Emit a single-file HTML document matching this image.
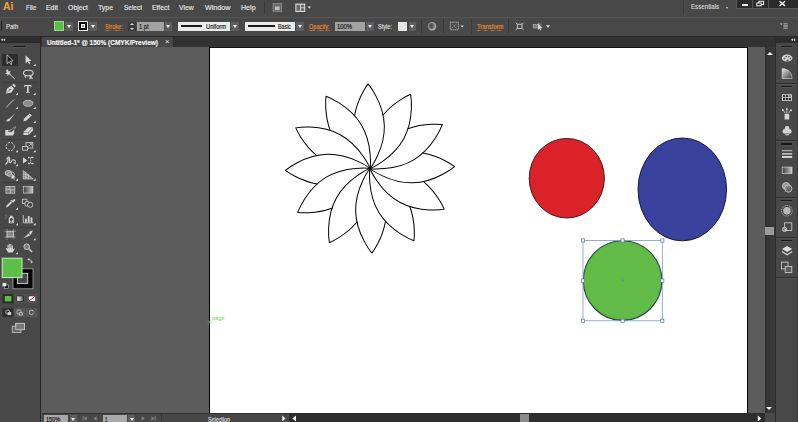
<!DOCTYPE html>
<html>
<head>
<meta charset="utf-8">
<title>Illustrator</title>
<style>
html,body{margin:0;padding:0;}
body{width:798px;height:422px;overflow:hidden;background:#5c5c5c;font-family:"Liberation Sans",sans-serif;position:relative;}
.abs{position:absolute;}
#menubar{left:0;top:0;width:798px;height:16px;background:#484848;}
#menusep{left:0;top:15.9px;width:798px;height:0.9px;background:#2c2c2c;}
#menuhl{left:0;top:17.4px;width:798px;height:0.8px;background:#545454;}
#ctrl{left:0;top:16px;width:798px;height:20px;background:#484848;}
#tabbar{left:0;top:35.8px;width:798px;height:11.1px;background:#323232;border-top:0.7px solid #292929;box-sizing:border-box;}
.mi{position:absolute;top:2.5px;font-size:8.3px;line-height:10px;color:#dcdcdc;white-space:nowrap;}
.ct{position:absolute;top:21.7px;font-size:7.2px;line-height:10px;color:#d8d8d8;white-space:nowrap;}
.t{position:absolute;white-space:nowrap;line-height:10px;transform-origin:0 50%;-webkit-text-stroke:0.18px currentColor;}
.or{background:linear-gradient(90deg,#c87a2c 55%,transparent 55%) 0 8.3px/1.3px 0.8px repeat-x;}
.dd{position:absolute;top:21.5px;height:9.5px;background:#5e5e5e;}
.dd:after{content:"";position:absolute;left:50%;top:3.5px;margin-left:-2px;width:0;height:0;border-left:2px solid transparent;border-right:2px solid transparent;border-top:3px solid #f0f0f0;}
.fld{position:absolute;top:21.5px;height:9.5px;background:#a2a2a2;font-size:7px;line-height:9.5px;color:#1a1a1a;white-space:nowrap;}
.wf{background:#ececec;}
.vs{position:absolute;top:19px;width:1px;height:15px;background:#3a3a3a;}
#tools{left:0;top:36px;width:40px;height:386px;background:#484848;}
#toolhdr{left:0;top:36px;width:40px;height:7.1px;background:linear-gradient(#272727,#303030 1px,#2b2b2b);}
#tooledge{left:39.8px;top:36px;width:1.5px;height:386px;background:#262626;}
#tab{left:41.5px;top:36.5px;width:131.5px;height:10.4px;background:#474747;}
#tabtxt{left:47px;top:38px;font-size:7.6px;line-height:10px;font-weight:bold;color:#e0e0e0;white-space:nowrap;transform:scaleX(0.86);transform-origin:0 0;}
#canvas{left:41.3px;top:46.9px;width:724px;height:366.3px;background:#5c5c5c;}
#art{left:209px;top:46.7px;width:538.9px;height:366.3px;background:#fff;border-left:1px solid #000;border-right:0.9px solid #000;border-top:1.1px solid #111;box-sizing:border-box;}
#vscroll{left:764.7px;top:46.7px;width:11.1px;height:366.3px;background:linear-gradient(90deg,#2a2a2a 0,#343434 1px,#353535 5px,#3a3a3a 7px,#383838 9.5px,#2c2c2c 10.4px);}
#dockedge{left:775px;top:36px;width:0.9px;height:386px;background:#2c2c2c;}
#dock{left:776px;top:36px;width:22px;height:386px;background:#484848;}
#dockhdr{left:776px;top:36px;width:22px;height:7.1px;background:linear-gradient(#272727,#303030 1px,#2b2b2b);}
#status{left:42px;top:412.6px;width:733px;height:9.4px;background:#474747;border-top:0.9px solid #303030;box-sizing:border-box;}
#hscroll{left:289px;top:413px;width:476px;height:9px;background:#2d2d2d;}
.sfld{position:absolute;top:415px;height:7px;background:#a8a8a8;font-size:6.5px;line-height:8px;color:#111;}
.tsep{position:absolute;left:2px;width:36px;height:1px;background:#3f3f3f;}
.grip{position:absolute;height:1.4px;background:#181818;box-shadow:0 0.7px 0 #5a5a5a;}
svg{position:absolute;left:0;top:0;overflow:visible;}
</style>
</head>
<body>
<div id="menubar" class="abs"></div>
<div id="menusep" class="abs"></div>
<div id="ctrl" class="abs"></div>
<div id="menuhl" class="abs"></div>
<div id="tabbar" class="abs"></div>

<!-- menu -->
<div class="abs" style="left:3.2px;top:0.2px;font-size:11.7px;line-height:12px;font-weight:bold;color:#f2a33a;transform:scaleX(0.88);transform-origin:0 0;">Ai</div>
<div class="abs" style="left:263.5px;top:1px;width:1px;height:13px;background:#3a3a3a;"></div>
<div class="abs" style="left:683px;top:1px;width:1px;height:13px;background:#3c3c3c;"></div>
<div class="abs" style="left:725.5px;top:7px;border-left:1.5px solid transparent;border-right:1.5px solid transparent;border-top:2px solid #ddd;"></div>
<!-- window buttons -->
<div class="abs" style="left:736px;top:0;width:62px;height:8.5px;background:#2b2b2b;border-bottom:1px solid #5a5a5a;border-left:1px solid #5a5a5a;box-sizing:border-box;"></div>
<div class="abs" style="left:752px;top:0;width:1px;height:8px;background:#555;"></div>
<div class="abs" style="left:768px;top:0;width:1px;height:8px;background:#555;"></div>
<div class="abs" style="left:741.8px;top:4.1px;width:6.2px;height:1.7px;background:#f2f2f2;"></div>

<!-- control bar -->
<div class="abs" style="left:1.3px;top:21px;width:1.2px;height:10px;background:#222;"></div>
<div class="abs" style="left:54px;top:21px;width:10px;height:10px;background:#5cbd46;border:1px solid #9bd68c;box-sizing:border-box;"></div>
<div class="dd" style="left:65px;width:8px;"></div>
<div class="abs" style="left:78px;top:21px;width:9.5px;height:10px;background:#000;border:1px solid #e6e6e6;box-sizing:border-box;"></div>
<div class="abs" style="left:80.7px;top:23.7px;width:4.2px;height:4.6px;background:#8e8e8e;border:1px solid #fff;box-sizing:border-box;"></div>
<div class="dd" style="left:89px;width:8px;"></div>
<div class="abs" style="left:127.8px;top:21.5px;width:7.8px;height:9.5px;background:#3a3a3a;"></div>
<div class="abs" style="left:130px;top:23px;border-left:2px solid transparent;border-right:2px solid transparent;border-bottom:2.5px solid #ddd;"></div>
<div class="abs" style="left:130px;top:27.5px;border-left:2px solid transparent;border-right:2px solid transparent;border-top:2.5px solid #ddd;"></div>
<div class="fld" style="left:137px;width:26.5px;">  </div>
<div class="dd" style="left:164.8px;width:7px;"></div>
<div class="fld wf" style="left:177.8px;width:52px;"></div>
<div class="abs" style="left:181px;top:25.1px;width:21px;height:1.8px;background:#1c1c1c;"></div>
<div class="dd" style="left:230.6px;width:8px;"></div>
<div class="fld wf" style="left:244.8px;width:50.2px;"></div>
<div class="abs" style="left:248px;top:25.1px;width:27px;height:1.8px;background:#1c1c1c;"></div>
<div class="dd" style="left:296px;width:8px;"></div>
<div class="fld" style="left:335.3px;width:29.7px;"></div>
<div class="dd" style="left:366px;width:7.8px;"></div>
<div class="abs" style="left:397.5px;top:21.5px;width:9.8px;height:9.5px;background:#e6e6e6;"></div>
<div class="dd" style="left:408.5px;width:7px;"></div>
<div class="vs" style="left:421px;"></div>
<div class="vs" style="left:443px;"></div>
<div class="vs" style="left:471px;"></div>
<div class="vs" style="left:507.5px;"></div>

<!-- tabs -->
<div id="tab" class="abs"></div>
<div class="abs" style="left:164.9px;top:38.4px;font-size:7.6px;line-height:8px;color:#f0f0f0;">×</div>

<!-- canvas -->
<div id="canvas" class="abs"></div>
<div id="art" class="abs"></div>
<div id="vscroll" class="abs"></div>
<div class="abs" style="left:765.3px;top:226.7px;width:8.8px;height:8.8px;background:#9a9a9a;"></div>
<div class="abs" style="left:766.7px;top:51.9px;width:0;height:0;border-left:3.1px solid transparent;border-right:3.1px solid transparent;border-bottom:3.8px solid #f8f8f8;"></div>
<div class="abs" style="left:766.4px;top:406.6px;width:0;height:0;border-left:3.1px solid transparent;border-right:3.1px solid transparent;border-top:3.8px solid #f8f8f8;"></div>

<!-- status -->
<div id="status" class="abs"></div>
<div id="hscroll" class="abs"></div>
<div class="abs" style="left:765px;top:413px;width:9.5px;height:9px;background:#4a4a4a;"></div>
<div class="abs" style="left:520px;top:413.7px;width:8.7px;height:9px;background:#8a8a8a;"></div>
<div class="sfld" style="left:44px;width:23.7px;"></div>
<div class="abs" style="left:69.5px;top:415px;width:7px;height:7px;background:#5e5e5e;"></div>
<div class="abs" style="left:71px;top:418px;border-left:2px solid transparent;border-right:2px solid transparent;border-top:3px solid #eee;"></div>
<div class="sfld" style="left:102.8px;width:24.6px;"></div>
<div class="abs" style="left:128px;top:415px;width:7px;height:7px;background:#5e5e5e;"></div>
<div class="abs" style="left:129.5px;top:418px;border-left:2px solid transparent;border-right:2px solid transparent;border-top:3px solid #eee;"></div>
<div class="abs" style="left:160.5px;top:414px;width:1px;height:8px;background:#363636;"></div>

<!-- texts -->
<span class="t " style="left:25.9px;top:2.6px;font-size:7.6px;color:#e2e2e2;transform:scaleX(0.841);">File</span>
<span class="t " style="left:46.0px;top:2.6px;font-size:7.6px;color:#e2e2e2;transform:scaleX(0.909);">Edit</span>
<span class="t " style="left:67.7px;top:2.6px;font-size:7.6px;color:#e2e2e2;transform:scaleX(0.911);">Object</span>
<span class="t " style="left:98.0px;top:2.6px;font-size:7.6px;color:#e2e2e2;transform:scaleX(0.911);">Type</span>
<span class="t " style="left:123.5px;top:2.6px;font-size:7.6px;color:#e2e2e2;transform:scaleX(0.853);">Select</span>
<span class="t " style="left:152.0px;top:2.6px;font-size:7.6px;color:#e2e2e2;transform:scaleX(0.902);">Effect</span>
<span class="t " style="left:179.4px;top:2.6px;font-size:7.6px;color:#e2e2e2;transform:scaleX(0.894);">View</span>
<span class="t " style="left:204.8px;top:2.6px;font-size:7.6px;color:#e2e2e2;transform:scaleX(0.944);">Window</span>
<span class="t " style="left:240.8px;top:2.6px;font-size:7.6px;color:#e2e2e2;transform:scaleX(0.934);">Help</span>
<span class="t " style="left:690.8px;top:2.3px;font-size:7.2px;color:#d2d2d2;transform:scaleX(0.858);">Essentials</span>
<span class="t " style="left:6.0px;top:22.3px;font-size:6.5px;color:#dedede;transform:scaleX(0.912);">Path</span>
<span class="t or" style="left:105.0px;top:22.2px;font-size:6.5px;color:#e08a2e;transform:scaleX(0.862);">Stroke:</span>
<span class="t " style="left:139.4px;top:22.4px;font-size:6.5px;color:#1c1c1c;transform:scaleX(0.885);">1 pt</span>
<span class="t " style="left:205.6px;top:22.4px;font-size:6.5px;color:#1c1c1c;transform:scaleX(0.879);">Uniform</span>
<span class="t " style="left:278.0px;top:22.4px;font-size:6.5px;color:#1c1c1c;transform:scaleX(0.817);">Basic</span>
<span class="t or" style="left:309.4px;top:22.2px;font-size:6.5px;color:#e08a2e;transform:scaleX(0.864);">Opacity:</span>
<span class="t " style="left:337.0px;top:22.4px;font-size:6.5px;color:#1c1c1c;transform:scaleX(0.902);">100%</span>
<span class="t " style="left:378.0px;top:22.3px;font-size:6.5px;color:#dedede;transform:scaleX(0.861);">Style:</span>
<span class="t or" style="left:477.0px;top:22.2px;font-size:6.5px;color:#e08a2e;transform:scaleX(0.902);">Transform</span>
<span class="t " style="left:47.0px;top:37.8px;font-size:7.0px;color:#f2f2f2;transform:scaleX(0.931);font-weight:bold;">Untitled-1* @ 150% (CMYK/Preview)</span>
<span class="t " style="left:45.8px;top:415.3px;font-size:6.3px;color:#141414;transform:scaleX(0.869);">150%</span>
<span class="t " style="left:105.2px;top:415.3px;font-size:6.3px;color:#141414;transform:scaleX(0.683);">1</span>
<span class="t " style="left:208.2px;top:414.7px;font-size:6.3px;color:#dcdcdc;transform:scaleX(0.849);">Selection</span>

<!-- tools -->
<div id="tools" class="abs"></div>
<div id="toolhdr" class="abs"></div>
<div id="tooledge" class="abs"></div>
<div class="grip" style="left:13px;top:46.1px;width:11.5px;"></div>
<div class="tsep" style="top:81.5px;"></div>
<div class="tsep" style="top:138.5px;"></div>
<div class="tsep" style="top:182px;"></div>
<div class="tsep" style="top:227px;"></div>
<div class="abs" style="left:2px;top:53.5px;width:16.3px;height:12.3px;background:#2d2d2d;"></div>

<!-- dock -->
<div id="dockedge" class="abs"></div>
<div id="dock" class="abs"></div>
<div id="dockhdr" class="abs"></div>
<div class="grip" style="left:781px;top:46.0px;width:11px;"></div>
<div class="grip" style="left:781px;top:86.1px;width:11px;"></div>
<div class="grip" style="left:781px;top:143.2px;width:11px;"></div>
<div class="grip" style="left:781px;top:199.8px;width:11px;"></div>
<div class="grip" style="left:781px;top:240.0px;width:11px;"></div>
<div class="abs" style="left:776px;top:82.9px;width:22px;height:0.8px;background:#2e2e2e;"></div><div class="abs" style="left:776px;top:83.9px;width:22px;height:0.8px;background:#535353;"></div>
<div class="abs" style="left:776px;top:140.3px;width:22px;height:0.8px;background:#2e2e2e;"></div><div class="abs" style="left:776px;top:141.3px;width:22px;height:0.8px;background:#535353;"></div>
<div class="abs" style="left:776px;top:196.5px;width:22px;height:0.8px;background:#2e2e2e;"></div><div class="abs" style="left:776px;top:197.5px;width:22px;height:0.8px;background:#535353;"></div>
<div class="abs" style="left:776px;top:237.1px;width:22px;height:0.8px;background:#2e2e2e;"></div><div class="abs" style="left:776px;top:238.1px;width:22px;height:0.8px;background:#535353;"></div>
<div class="abs" style="left:776px;top:277.4px;width:22px;height:0.8px;background:#2e2e2e;"></div><div class="abs" style="left:776px;top:278.4px;width:22px;height:0.8px;background:#535353;"></div>
<div class="abs" style="left:797.3px;top:43px;width:0.7px;height:379px;background:#3a3a3a;"></div>

<!-- icons -->
<svg width="798" height="422" viewBox="0 0 798 422" id="icons">
<g fill="#d6d6d6" stroke="none">
<!-- collapse arrows -->
<path d="M0.9 39.8L2.8 38.3V41.3ZM3.2 39.8L5.1 38.3V41.3Z"/>
<path d="M791 39.8L792.9 38.3V41.3ZM793.3 39.8L795.2 38.3V41.3Z"/>
<!-- flyout triangles -->
<path id="fl" d="M0 0V-2.3L-2.3 0Z" fill="#f0f0f0" transform="translate(35.6,66)"/>
<use href="#fl" x="-17.6" y="29"/><use href="#fl" y="29"/>
<use href="#fl" x="-17.6" y="43"/><use href="#fl" y="43"/>
<use href="#fl" y="57"/>
<use href="#fl" y="71"/>
<use href="#fl" x="-17.6" y="86.3"/><use href="#fl" y="86.3"/>
<use href="#fl" x="-17.6" y="100.3"/>
<use href="#fl" x="-17.6" y="114.8"/><use href="#fl" y="114.8"/>
<use href="#fl" x="-17.6" y="143.8"/>
<use href="#fl" x="-17.6" y="159.3"/><use href="#fl" y="159.3"/>
<use href="#fl" y="174.3"/>
<use href="#fl" x="-17.6" y="188.3"/>
</g>
<!-- selection tool (active) -->
<path d="M7 54.8V63.6L9.2 61.6L10.8 64.6L12 64L10.5 61.1L13.2 60.8Z" fill="#1a1a1a" stroke="#e8e8e8" stroke-width="0.7" stroke-linejoin="round"/>
<!-- direct selection -->
<path d="M25.6 55.3V63.5L27.7 61.6L29.2 64.3L30.3 63.7L28.9 61.1L31.4 60.8Z" fill="#d6d6d6"/>
<!-- magic wand -->
<path d="M9.5 74L14.8 79" stroke="#d6d6d6" stroke-width="1" fill="none"/>
<path d="M7.8 69.3L8.6 71.4L10.8 70.9L9.6 72.7L11 74.4L8.8 74.2L7.8 76.2L7.2 74.1L5 73.8L6.8 72.6L6 70.6Z" fill="#d6d6d6"/>
<!-- lasso -->
<ellipse cx="28.3" cy="73" rx="4.8" ry="2.8" fill="none" stroke="#d6d6d6" stroke-width="1.1"/>
<path d="M25.2 75.2C24.6 76.4 25 77.6 26.2 78M30.2 75.2L32.5 78.5L30.5 77.8L29.8 79.2Z" fill="#d6d6d6" stroke="#d6d6d6" stroke-width="0.7"/>
<!-- pen -->
<path d="M5.7 93.8L7.2 88.5L11.2 85.8L14 88.6L11.4 92.5ZM12.2 85L13.8 83.8L15.8 85.8L14.7 87.4Z" fill="#d6d6d6"/>
<path d="M5.9 93.6L9.6 89.9" stroke="#484848" stroke-width="0.6"/>
<circle cx="10" cy="89.5" r="0.8" fill="#484848"/>
<!-- type -->
<path d="M24.4 85H31.4V87.2H30.8C30.7 86.3 30.3 85.9 29.4 85.9H28.7V91.2C28.7 91.8 29 92 29.8 92V92.7H26V92C26.8 92 27.1 91.8 27.1 91.2V85.9H26.4C25.5 85.9 25.1 86.3 25 87.2H24.4Z" fill="#d6d6d6"/>
<!-- line -->
<path d="M6.3 107.3L14.2 99.3" stroke="#d6d6d6" stroke-width="0.9"/>
<!-- ellipse -->
<ellipse cx="28.1" cy="103.3" rx="4.8" ry="3" fill="#8c8c8c" stroke="#c8c8c8" stroke-width="0.8"/>
<!-- brush -->
<path d="M15.4 113L9.6 118.4L10.6 119.3Z" fill="#d6d6d6"/>
<path d="M9.3 118.6C8.3 118.6 7.6 119.2 7.3 120C7 120.7 6.2 121 5.4 120.8C6.6 121.6 8.6 121.6 9.6 120.8C10.4 120.2 10.5 119.4 10.3 119Z" fill="#d6d6d6"/>
<!-- pencil -->
<path d="M23.3 121.5L24.2 118.6L29.6 113.6L31.9 115.6L26.4 120.6Z" fill="#d6d6d6"/>
<path d="M28.6 114.6L30.8 116.6" stroke="#484848" stroke-width="0.5"/>
<!-- blob brush -->
<path d="M5.3 130H14.2V133.3L12.8 135.4H5.3Z" fill="#d6d6d6"/>
<path d="M7.2 131.6C8.6 129.6 11.6 130.6 12.4 128.8C13.4 127.6 15 126.8 15.8 127C15.4 128.4 14.4 129.4 13.6 130C13.4 132 10.6 132.8 7.2 131.6Z" fill="#484848" stroke="#d6d6d6" stroke-width="0.5"/>
<!-- eraser -->
<path d="M23.4 132L28.4 127.2H33L28.2 132ZM23.4 132.4H28.2V135H23.4ZM28.6 132.3L33 127.8V130.6L28.6 135Z" fill="#d6d6d6"/>
<!-- rotate -->
<circle cx="10.2" cy="146.5" r="4.1" fill="none" stroke="#d6d6d6" stroke-width="0.9" stroke-dasharray="2.2 1.1"/>
<!-- scale -->
<rect x="26" y="142.5" width="6.8" height="5.6" fill="none" stroke="#d6d6d6" stroke-width="0.8"/>
<rect x="22.6" y="146.5" width="5" height="3.7" fill="#484848" stroke="#d6d6d6" stroke-width="0.8"/>
<path d="M28.6 146.4L31.4 143.8M31.6 143.6V145.6M31.6 143.6H29.6" stroke="#d6d6d6" stroke-width="0.7" fill="none"/>
<!-- width/warp -->
<path d="M5.3 164.5C7.5 163 8.4 160 8.2 157.2C9.6 156.4 10 159 9.4 161C8.8 163 10.6 163.4 11.4 161.4C12.2 159.4 14.4 159 15.6 161.6" fill="none" stroke="#d6d6d6" stroke-width="1.1"/>
<path d="M6 158.5L8 157L7.4 160ZM13 163L15.8 161.6L15.4 164.2Z" fill="#d6d6d6"/>
<!-- free transform -->
<path d="M23 157.2L27.4 160.4L23 163.6Z" fill="#d6d6d6"/>
<path d="M28.6 157.4H32.8M28.6 163.6H32.8M30.7 157.4V163.6" stroke="#d6d6d6" stroke-width="0.9" stroke-dasharray="1.4 0.8"/>
<rect x="28" y="156.8" width="1.4" height="1.4" fill="#d6d6d6"/><rect x="32" y="156.8" width="1.4" height="1.4" fill="#d6d6d6"/><rect x="28" y="162.8" width="1.4" height="1.4" fill="#d6d6d6"/><rect x="32" y="162.8" width="1.4" height="1.4" fill="#d6d6d6"/>
<!-- shape builder -->
<ellipse cx="8.4" cy="173" rx="3.4" ry="2.6" fill="#8a8a8a" stroke="#d6d6d6" stroke-width="0.7"/>
<ellipse cx="11" cy="174.4" rx="3.4" ry="2.6" fill="none" stroke="#d6d6d6" stroke-width="0.7"/>
<path d="M11.6 173.4V179.2L13 178L14 179.8L14.8 179.4L13.9 177.6L15.8 177.4Z" fill="#d6d6d6"/>
<!-- perspective grid -->
<path d="M23.2 170.6V179H33.4ZM25.8 171.6V179M28.4 173.8V179M23.2 173.4L30.6 176.6M23.2 176.2L27.4 178" fill="#8a8a8a" stroke="#d6d6d6" stroke-width="0.6"/>
<!-- mesh -->
<rect x="5.9" y="186.4" width="8.9" height="6.8" fill="#7a7a7a" stroke="#d6d6d6" stroke-width="0.7"/>
<path d="M5.9 189.6C8 188.4 11 191 14.8 189.4M10 186.4C8.8 188.4 11.4 190.6 10.2 193.2" fill="none" stroke="#d6d6d6" stroke-width="0.7"/>
<!-- gradient tool -->
<defs><linearGradient id="gr1" x1="0" x2="1" y1="0" y2="0"><stop offset="0" stop-color="#3a3a3a"/><stop offset="1" stop-color="#c8c8c8"/></linearGradient>
<linearGradient id="gr2" x1="0" x2="1" y1="0" y2="0"><stop offset="0" stop-color="#ffffff"/><stop offset="1" stop-color="#555"/></linearGradient>
<linearGradient id="gr3" x1="0" x2="1" y1="0" y2="1"><stop offset="0" stop-color="#e8e8e8"/><stop offset="1" stop-color="#3a3a3a"/></linearGradient></defs>
<rect x="23.3" y="186.5" width="9.6" height="6.6" fill="url(#gr1)" stroke="#d0d0d0" stroke-width="0.7"/>
<!-- eyedropper -->
<path d="M5.9 207.5L6.6 205.4L10.6 201.4L12 202.8L8 206.8Z" fill="#d6d6d6"/>
<path d="M10.4 200.4L12.4 202.6L13 202L13.6 202.4L15.2 200.6C15.6 199.8 14.6 198.8 13.8 199.2L12 200.8L11.2 199.8Z" fill="#d6d6d6"/>
<!-- blend -->
<rect x="22.5" y="199.2" width="4.4" height="4.4" fill="none" stroke="#d6d6d6" stroke-width="0.8"/>
<rect x="25" y="201.6" width="4.4" height="4.4" rx="1.2" fill="#484848" stroke="#d6d6d6" stroke-width="0.8"/>
<circle cx="30.2" cy="204.8" r="2.6" fill="#484848" stroke="#d6d6d6" stroke-width="0.8"/>
<!-- symbol sprayer -->
<path d="M8.8 217.4H13.8V223.2H8.8ZM10 217.4V215.8H12.6V217.4" fill="#d6d6d6"/>
<circle cx="11.3" cy="219.6" r="1.5" fill="#484848"/><path d="M9.8 222.6C10 221 12.6 221 12.8 222.6Z" fill="#484848"/>
<path d="M5.4 215.6L6.4 214.6M7 216.4L7.8 215.6M6.2 217.6L5.4 218.2" stroke="#d6d6d6" stroke-width="0.6"/>
<!-- graph -->
<path d="M23.3 215V222.8H33.4" fill="none" stroke="#d6d6d6" stroke-width="0.8"/>
<rect x="25" y="218.6" width="1.8" height="3.8" fill="#d6d6d6"/><rect x="27.8" y="216" width="1.8" height="6.4" fill="#d6d6d6"/><rect x="30.6" y="217.4" width="1.8" height="5" fill="#d6d6d6"/>
<!-- artboard -->
<rect x="7" y="231.2" width="6.6" height="5.8" fill="#8a8a8a" stroke="#d6d6d6" stroke-width="0.6"/>
<path d="M4.6 231.2H16M4.6 237H16M7 229V239.4M13.6 229V239.4" stroke="#d6d6d6" stroke-width="0.6" stroke-dasharray="1.6 0.8"/>
<!-- slice -->
<path d="M23.3 238.5L28.6 233.4L30.4 235.2ZM29 233L30.4 231L33 230.6L30.8 234.8Z" fill="#d6d6d6"/>
<!-- hand -->
<path d="M8 252.4C7.4 250.8 6.2 249.6 5.7 248.4C5.9 247.6 6.8 247.8 7.5 248.8L7.5 245.3C7.6 244.5 8.5 244.5 8.6 245.3L8.8 244.3C9 243.5 9.9 243.5 10 244.3L10.3 244.6C10.5 243.9 11.4 243.9 11.5 244.7L11.8 245.6C12.1 245 12.9 245.2 12.9 245.9L13 249.4C13.8 248.2 14.8 248.2 14.8 248.9C14 250 13.6 251.4 12.4 252.4Z" fill="#d2d2d2"/>
<path d="M8.7 245.4V248.4M10.1 244.6V248.2M11.6 245V248.4" stroke="#484848" stroke-width="0.45" fill="none"/>
<!-- zoom -->
<circle cx="26.7" cy="246.7" r="2.8" fill="#7a7a7a" stroke="#d6d6d6" stroke-width="0.9"/>
<path d="M28.8 248.8L32.2 252" stroke="#d6d6d6" stroke-width="1.3"/>
<!-- fill / stroke -->
<rect x="13" y="268.8" width="20" height="20" fill="#000" stroke="#a8a8a8" stroke-width="0.8"/>
<rect x="17.4" y="273.3" width="10.3" height="10.1" fill="#484848" stroke="#dcdcdc" stroke-width="0.9"/>
<rect x="2.2" y="258.2" width="19.8" height="19.4" fill="#5cbf47" stroke="#cdeec0" stroke-width="1"/>
<path d="M28.2 259.4C30 259 31.4 260.2 31.6 262" fill="none" stroke="#d2d2d2" stroke-width="0.8"/><path d="M27.2 259.6L29.4 258V260.8ZM31.7 263.4L30.2 261.4H33Z" fill="#d2d2d2"/>
<rect x="4.6" y="285" width="3.8" height="3.4" fill="#111" stroke="#d6d6d6" stroke-width="0.5"/>
<rect x="2.6" y="283" width="3.6" height="3.2" fill="#eee" stroke="#888" stroke-width="0.4"/>
<!-- colour mode row -->
<rect x="2.5" y="294" width="10.9" height="9.4" fill="#2c2c2c"/>
<rect x="4.8" y="296" width="6.6" height="5.4" fill="#5cbf47"/>
<rect x="14.8" y="294" width="10.5" height="9.4" fill="#525252"/>
<rect x="16.9" y="296" width="6.7" height="5.4" fill="url(#gr2)" stroke="#111" stroke-width="0.6"/>
<rect x="26.4" y="294" width="10.6" height="9.4" fill="#525252"/>
<rect x="28.5" y="296" width="6.9" height="5.4" fill="#fff" stroke="#222" stroke-width="0.5"/>
<path d="M28.8 301.2L35.1 296.2" stroke="#d0202a" stroke-width="1"/>
<!-- draw mode row -->
<rect x="2.3" y="308.2" width="11.1" height="8.8" fill="#2e2e2e"/>
<rect x="13.9" y="308.2" width="11.4" height="8.8" fill="#5a5a5a"/>
<rect x="26" y="308.2" width="11.3" height="8.8" fill="#575757"/>
<g fill="none" stroke="#d6d6d6" stroke-width="0.7">
<circle cx="7.6" cy="312" r="2"/><rect x="8" y="312.6" width="2.8" height="2.2" fill="#d6d6d6"/>
<circle cx="19" cy="312" r="2.2"/><rect x="19.6" y="312.8" width="2.8" height="2.2" fill="#5a5a5a"/>
<circle cx="31.4" cy="312.4" r="2.2"/><rect x="31.4" y="311.6" width="2.2" height="1.8" fill="#575757" stroke="none"/>
</g>
<!-- screen mode -->
<rect x="15.8" y="323.3" width="8.8" height="6.4" fill="#777" stroke="#d6d6d6" stroke-width="0.7"/>
<rect x="12.2" y="326.2" width="8.8" height="6.2" fill="#666" stroke="#d6d6d6" stroke-width="0.7"/>
<rect x="15.8" y="323.3" width="8.8" height="6.4" fill="#777" stroke="#d6d6d6" stroke-width="0.7" fill-opacity="0.85"/>

<!-- dock icons -->
<!-- color -->
<ellipse cx="787.1" cy="58.1" rx="5.4" ry="3.5" fill="#d6d6d6"/>
<circle cx="784.4" cy="58.6" r="0.8" fill="#484848"/><circle cx="786.2" cy="56.6" r="0.8" fill="#484848"/><circle cx="788.8" cy="56.6" r="0.8" fill="#484848"/><circle cx="790.4" cy="58.4" r="0.8" fill="#484848"/><ellipse cx="787.6" cy="60.2" rx="1.3" ry="0.8" fill="#484848"/>
<!-- color guide -->
<path d="M782.1 68.6C787.8 68.6 792 72.6 792 78.5H782.1Z" fill="url(#gr3)" stroke="#d0d0d0" stroke-width="0.7"/>
<!-- swatches -->
<rect x="782" y="94.3" width="9.9" height="6.5" fill="#d6d6d6"/>
<g fill="#2a2a2a"><rect x="783" y="95.2" width="2.2" height="2"/><rect x="785.9" y="95.2" width="2.2" height="2"/><rect x="783" y="98" width="2.2" height="2"/><rect x="785.9" y="98" width="2.2" height="2"/><rect x="788.8" y="98" width="2.2" height="2"/></g>
<rect x="788.8" y="95.2" width="2.2" height="2" fill="#777"/>
<!-- brushes -->
<path d="M784.6 114H789.2V119.5H784.6Z" fill="#d6d6d6"/>
<path d="M785.6 113.6L783 109.8M786.9 113.6V108.4M788.2 113.6L790.8 110" stroke="#d6d6d6" stroke-width="0.8" fill="none"/>
<circle cx="782.8" cy="110" r="1" fill="#d6d6d6"/><circle cx="791" cy="110.2" r="1" fill="#d6d6d6"/><ellipse cx="786.9" cy="109" rx="0.7" ry="1.3" fill="#d6d6d6"/>
<!-- symbols (club) -->
<circle cx="787.1" cy="128.4" r="2.3" fill="#d6d6d6"/><circle cx="784.9" cy="131.4" r="2.3" fill="#d6d6d6"/><circle cx="789.3" cy="131.4" r="2.3" fill="#d6d6d6"/>
<path d="M787.1 130V134.4M785.2 134.8H789" stroke="#d6d6d6" stroke-width="1"/>
<!-- stroke -->
<rect x="782" y="150.3" width="10.2" height="0.9" fill="#d6d6d6"/><rect x="782" y="153.2" width="10.2" height="1.4" fill="#d6d6d6"/><rect x="782" y="156" width="10.2" height="1.9" fill="#d6d6d6"/>
<!-- gradient -->
<rect x="782.2" y="167.1" width="9.8" height="6.4" fill="url(#gr1)" stroke="#d6d6d6" stroke-width="0.7"/>
<!-- transparency -->
<circle cx="786" cy="186" r="3.6" fill="#9a9a9a" stroke="#d6d6d6" stroke-width="0.6"/>
<circle cx="788.3" cy="188.6" r="3.6" fill="#6a6a6a" fill-opacity="0.7" stroke="#d6d6d6" stroke-width="0.8"/>
<!-- appearance -->
<circle cx="786.9" cy="210.8" r="5.3" fill="none" stroke="#d6d6d6" stroke-width="0.8" stroke-dasharray="1 0.9"/>
<circle cx="786.9" cy="210.8" r="3.7" fill="#b8b8b8"/>
<!-- graphic styles -->
<rect x="784.6" y="222.8" width="7.2" height="7.6" fill="none" stroke="#d6d6d6" stroke-width="0.8"/>
<circle cx="784.6" cy="229.4" r="2.2" fill="#8a8a8a" stroke="#d6d6d6" stroke-width="0.7"/>
<circle cx="785.6" cy="230" r="1" fill="#d6d6d6"/>
<!-- layers -->
<path d="M782 251.6L787.1 254.8L792.2 251.6" fill="none" stroke="#d6d6d6" stroke-width="1.2"/>
<path d="M782 249L787.1 246.1L792.2 249L787.1 252Z" fill="#e0e0e0"/>
<!-- artboards -->
<rect x="781.6" y="262.1" width="6.4" height="6.8" fill="none" stroke="#d6d6d6" stroke-width="0.8"/>
<rect x="785.2" y="266.4" width="6.6" height="6" fill="#5a5a5a" stroke="#d6d6d6" stroke-width="0.8"/>

<!-- menu bar icons -->
<rect x="273" y="3.6" width="8.8" height="8.2" fill="#6a6a6a" stroke="#9a9a9a" stroke-width="0.6"/>
<path d="M275 10V6.4H279.6V10ZM276 9L277.4 7.4L278.4 8.4L279 8V9.4H276Z" fill="#bdbdbd"/>
<rect x="295.3" y="3.6" width="10" height="8.4" fill="#d6d6d6"/>
<rect x="296.4" y="4.8" width="3.6" height="6" fill="#6a6a6a"/><rect x="300.8" y="4.8" width="3.4" height="2.6" fill="#6a6a6a"/><rect x="300.8" y="8.2" width="3.4" height="2.6" fill="#6a6a6a"/>
<path d="M307.6 6.6H311L309.3 8.8Z" fill="#e0e0e0"/>
<!-- window controls -->
<rect x="758.8" y="1.3" width="4.8" height="3.2" fill="none" stroke="#f0f0f0" stroke-width="1"/>
<rect x="756.8" y="3" width="4.4" height="2.8" fill="#2a2a2a" stroke="#f0f0f0" stroke-width="1"/>
<path d="M779.6 1.3L785 5.9M785 1.3L779.6 5.9" stroke="#f4f4f4" stroke-width="1.4"/>
<!-- control bar icons -->
<defs><radialGradient id="gl" cx="0.42" cy="0.45" r="0.6"><stop offset="0" stop-color="#3c3c3c"/><stop offset="0.45" stop-color="#6a6a6a"/><stop offset="1" stop-color="#c8c8c8"/></radialGradient></defs>
<circle cx="432" cy="26.3" r="4.2" fill="url(#gl)"/>
<rect x="450.3" y="22.2" width="8" height="7.6" fill="none" stroke="#d6d6d6" stroke-width="0.8" stroke-dasharray="1.2 0.8"/>
<path d="M451.6 23.4L457 28.6M457 23.4L451.6 28.6" stroke="#9a9a9a" stroke-width="0.6"/>
<path d="M460.4 25.4H464L462.2 27.6Z" fill="#e0e0e0"/>
<rect x="517.4" y="24.2" width="4.6" height="4.2" fill="none" stroke="#d6d6d6" stroke-width="0.9"/>
<path d="M515.6 22.6L517.2 24M523.6 22.6L522.2 24M515.6 30L517.2 28.6M523.6 30L522.2 28.6" stroke="#d6d6d6" stroke-width="0.8"/>
<rect x="533.2" y="24.4" width="5" height="3.6" fill="#7a7a7a" stroke="#bdbdbd" stroke-width="0.6"/>
<path d="M538 23V30L539.6 28.6L540.6 30.6L541.4 30.2L540.5 28.2L542.4 28Z" fill="#d6d6d6"/>
<path d="M539 22.6L541.8 25.6M541.8 22.6L539 25.6" stroke="#9a9a9a" stroke-width="0.6"/>
<path d="M546 25.2H550L548 27.8Z" fill="#e8e8e8"/>
<path d="M780 23.4H782.4L781.2 25ZM783.4 23.4H787.8V24.2H783.4ZM783.4 25.6H787.8V26.4H783.4ZM783.4 27.8H787.8V28.6H783.4Z" fill="#d6d6d6"/>
<!-- status bar nav -->
<g fill="#7e7e7e">
<path d="M82.6 416H83.6V421H82.6ZM86.8 416V421L83.8 418.5Z"/>
<path d="M96.6 416V421L93.4 418.5Z"/>
<path d="M141.6 416V421L144.8 418.5Z"/>
<path d="M151.4 416V421L154.4 418.5ZM154.6 416H155.6V421H154.6Z"/>
</g>
<path d="M282.2 415.6V421.6L285.6 418.6Z" fill="#e8e8e8"/>
<path d="M296 415.6V421.6L292.4 418.6Z" fill="#f2f2f2"/>
<path d="M757.8 415.6V421.6L761.2 418.6Z" fill="#f2f2f2"/>
</svg>

<!-- artwork -->
<svg width="798" height="422" viewBox="0 0 798 422">
<defs>
<path id="pt" d="M0.00 -84.60C0.00 -84.60 15.30 -65.66 15.30 -42.30M15.30 -42.30C15.30 -18.95 0.02 -0.02 0.00 -0.00M0.00 -84.60C0.00 -84.60 -10.77 -71.27 -14.24 -53.18" fill="none" stroke="#000" stroke-width="1" stroke-linecap="round"/>
</defs>
<g transform="translate(370,168.5) rotate(-1.3)">
<use href="#pt"/><use href="#pt" transform="rotate(30)"/><use href="#pt" transform="rotate(60)"/><use href="#pt" transform="rotate(90)"/><use href="#pt" transform="rotate(120)"/><use href="#pt" transform="rotate(150)"/><use href="#pt" transform="rotate(180)"/><use href="#pt" transform="rotate(210)"/><use href="#pt" transform="rotate(240)"/><use href="#pt" transform="rotate(270)"/><use href="#pt" transform="rotate(300)"/><use href="#pt" transform="rotate(330)"/>
</g>
<ellipse cx="566.8" cy="178.2" rx="37.6" ry="39.8" fill="#da2228" stroke="#2a1010" stroke-width="0.9"/>
<ellipse cx="682.3" cy="189.4" rx="44.3" ry="51.4" fill="#39439d" stroke="#101020" stroke-width="0.9"/>
<ellipse cx="622.6" cy="280.6" rx="39.3" ry="39.8" fill="#62bb46" stroke="#1f4a40" stroke-width="1.1"/>
<!-- selection -->
<rect x="583.0" y="240.5" width="79.3" height="80.3" fill="none" stroke="#7790c8" stroke-width="0.75"/>
<g fill="#fff" stroke="#4f72b8" stroke-width="0.7">
<rect x="581.4" y="238.9" width="3.2" height="3.2"/><rect x="621.0" y="238.9" width="3.2" height="3.2"/><rect x="660.7" y="238.9" width="3.2" height="3.2"/><rect x="581.4" y="279.0" width="3.2" height="3.2"/><rect x="660.7" y="279.0" width="3.2" height="3.2"/><rect x="581.4" y="319.2" width="3.2" height="3.2"/><rect x="621.0" y="319.2" width="3.2" height="3.2"/><rect x="660.7" y="319.2" width="3.2" height="3.2"/>
</g>
<rect x="621.6" y="279.6" width="2" height="2" fill="#4f86e8"/>
<!-- smart guide label -->
<text x="212" y="319.5" font-family="Liberation Sans, sans-serif" font-size="5.6" fill="#66d866">page</text>
<path d="M208 323.5L210.5 320.5M208 320.5L210.5 323.5" stroke="#5fcf5f" stroke-width="0.6" fill="none"/>
</svg>
</body>
</html>
